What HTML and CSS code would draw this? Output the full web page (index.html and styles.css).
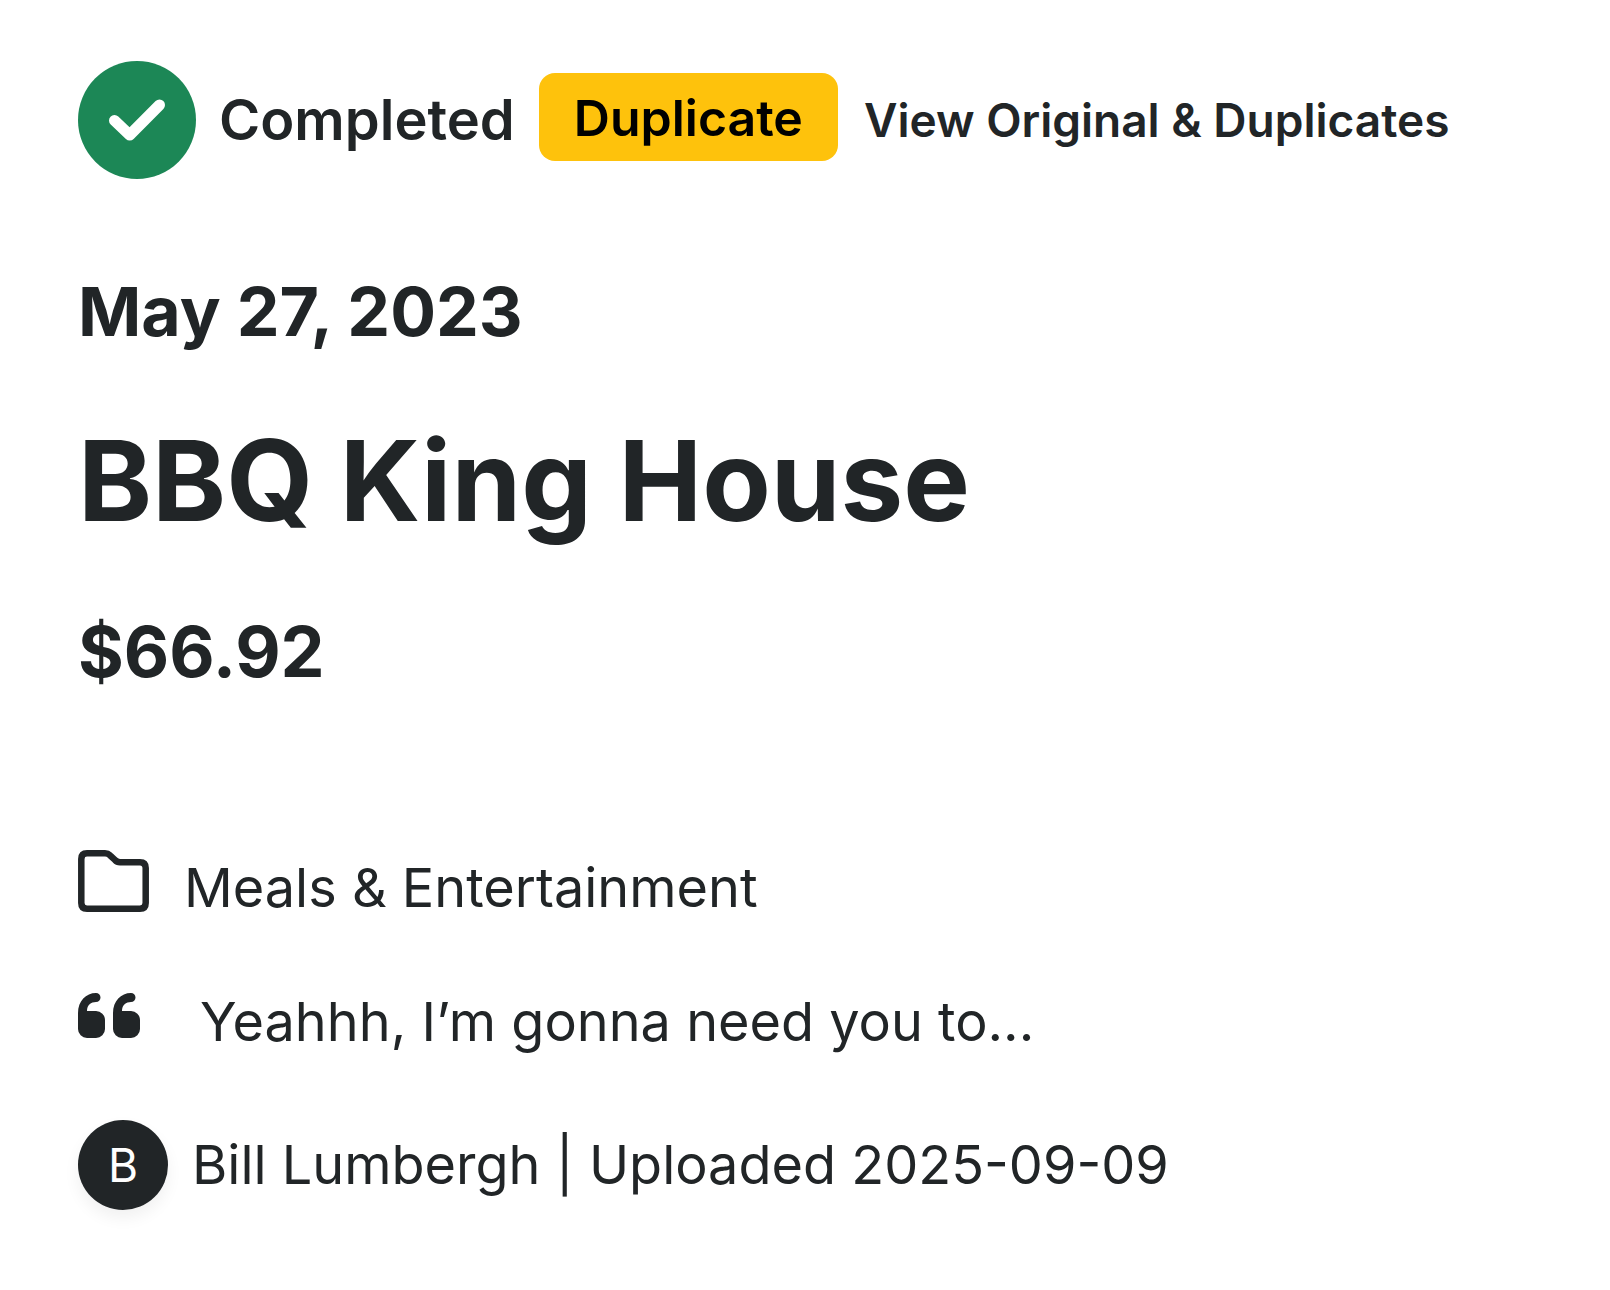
FILE: index.html
```html
<!doctype html>
<html lang="en">
  <head>
    <meta charset="utf-8">
    <title>BBQ King House</title>
    <link rel="stylesheet" href="styles.css">
  </head>
  <body>
    <main class="receipt">
      <header class="status">
        <svg class="status-icon" viewBox="0 0 118 118" aria-hidden="true">
          <circle cx="59" cy="59" r="59" fill="#1c8756"/>
          <path d="M36.500 59.500 51.700 74 81.500 44" fill="none" stroke="#fff" stroke-width="11" stroke-linecap="round" stroke-linejoin="round"/>
        </svg>
        <span class="status-text">Completed</span>
        <span class="badge">Duplicate</span>
        <a class="originals" href="#">View Original &amp; Duplicates</a>
      </header>
      <p class="date">May 27, 2023</p>
      <h1 class="merchant">BBQ King House</h1>
      <p class="amount">$66.92</p>
      <ul class="details">
        <li class="detail">
          <svg class="folder-icon" viewBox="0 0 71 62" aria-hidden="true">
            <path d="M9 3.300H27Q30 3.300 32 5.300L37 10Q39 12.200 42 12.200H62Q67.700 12.200 67.700 18V53Q67.700 58.700 62 58.700H9Q3.300 58.700 3.300 53V9Q3.300 3.300 9 3.300Z" fill="none" stroke="#212527" stroke-width="6.500"/>
          </svg>
          <span>Meals &amp; Entertainment</span>
        </li>
        <li class="detail note">
          <svg class="quote-icon" viewBox="0 0 62 45" aria-hidden="true">
            <path id="mark" d="M0 20C0 8 8 0 18 0A4.500 4.500 0 0 1 18 9C13 9 9 12 9 18H18A9 9 0 0 1 27 27V36A9 9 0 0 1 18 45H9A9 9 0 0 1 0 36Z" fill="#212527"/>
            <use href="#mark" x="35"/>
          </svg>
          <span>Yeahhh, I’m gonna need you to...</span>
        </li>
        <li class="detail">
          <span class="avatar">B</span>
          <span>Bill Lumbergh | Uploaded 2025-09-09</span>
        </li>
      </ul>
    </main>
  </body>
</html>
```
FILE: styles.css
```css
body {
  margin: 0;
  background-color: #fff;
  color: #212527;
  font-family: Inter, "Liberation Sans", sans-serif;
}
.receipt {
  padding: 61px 78px;
}
.status {
  display: flex;
  align-items: center;
}
.status-icon {
  width: 118px;
  height: 118px;
  margin-right: 23px;
}
.status-text {
  font-size: 56px;
  font-weight: 600;
}
.badge {
  margin: 0 0 6px 24px;
  padding: 2px 35px 0;
  border-radius: 16px;
  background-color: #fec20c;
  color: #000;
  font-size: 50px;
  font-weight: 600;
  line-height: 86px;
}
.originals {
  margin-left: 26px;
  color: inherit;
  font-size: 46px;
  font-weight: 600;
  text-decoration: none;
  white-space: nowrap;
}
.date,
.amount {
  margin: 0;
  font-size: 68px;
  font-weight: 700;
  line-height: 84px;
}
.date {
  margin-top: 90px;
}
.merchant {
  margin: 57px 0 60px;
  font-size: 112px;
  font-weight: 700;
  line-height: 140px;
}
.amount {
  font-size: 70px;
}
.details {
  margin: 152px 0 0;
  padding: 0;
  list-style: none;
}
.detail {
  display: flex;
  align-items: center;
  font-size: 54px;
  line-height: 84px;
}
.folder-icon {
  width: 71px;
  height: 62px;
  margin: 0 35px 14px 0;
}
.note {
  margin: 50px 0 56px;
}
.quote-icon {
  width: 62px;
  height: 45px;
  margin: 0 60px 14px 0;
}
.avatar {
  width: 90px;
  height: 90px;
  margin-right: 24px;
  border-radius: 50%;
  background-color: #212527;
  box-shadow: 0 8px 16px rgba(0, 0, 0, 0.06);
  color: #fff;
  font-size: 46px;
  line-height: 90px;
  text-align: center;
}
```
